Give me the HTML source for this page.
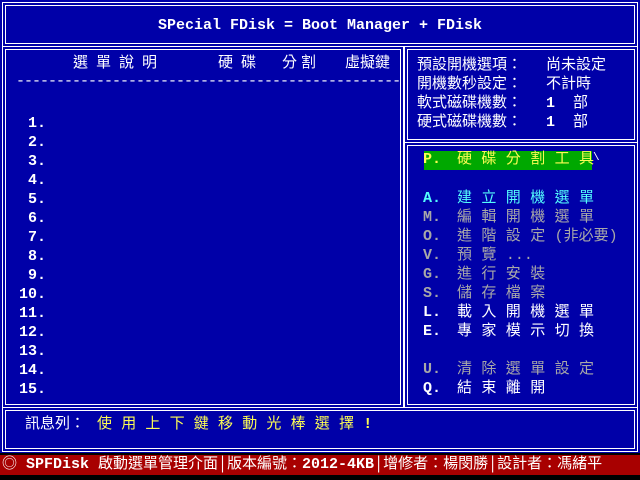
<!DOCTYPE html>
<html><head><meta charset="utf-8"><style>
body{margin:0;width:640px;height:480px;background:#000;position:relative;overflow:hidden;font-family:"Liberation Mono","WenQuanYi Zen Hei","Noto Sans CJK TC",monospace;color:#fff}
.bg{position:absolute;left:0;top:0;width:640px;height:453px;background:#0000a8}
.b{position:absolute;border:1px solid #fff;box-sizing:border-box}
.t{position:absolute;white-space:pre;font-size:15px;line-height:16px}
.bd{font-weight:bold}
.c{color:#54fcfc}.g{color:#a8a8a8}.y{color:#fcfc54}
</style></head><body>
<div class="bg"></div>
<div class="b" style="left:2px;top:2px;width:636px;height:45px"></div>
<div class="b" style="left:5px;top:5px;width:630px;height:39px"></div>
<div class="b" style="left:2px;top:46px;width:402px;height:362px"></div>
<div class="b" style="left:5px;top:49px;width:396px;height:356px"></div>
<div class="b" style="left:404px;top:46px;width:234px;height:97px"></div>
<div class="b" style="left:407px;top:49px;width:228px;height:91px"></div>
<div class="b" style="left:404px;top:142px;width:234px;height:266px"></div>
<div class="b" style="left:407px;top:145px;width:228px;height:260px"></div>
<div class="b" style="left:2px;top:407px;width:636px;height:45px"></div>
<div class="b" style="left:5px;top:410px;width:630px;height:39px"></div>
<div style="position:absolute;left:0;top:455px;width:640px;height:20px;background:#a80000"></div>

<div class="t bd" style="left:0;width:640px;text-align:center;top:18px">SPecial FDisk = Boot Manager + FDisk</div>

<div class="t" style="left:73px;top:56px;letter-spacing:8px">選單說明</div>
<div class="t" style="left:218px;top:56px;letter-spacing:8px">硬碟</div>
<div class="t" style="left:282px;top:56px;letter-spacing:4px">分割</div>
<div class="t" style="left:345px;top:56px">虛擬鍵</div>
<div class="t" style="left:16px;top:74px;letter-spacing:-1px;width:385px;overflow:hidden">----------------------------------------------------------------</div>

<div class="t bd" style="left:16px;top:114px;line-height:19px;width:30px;text-align:right">1.
2.
3.
4.
5.
6.
7.
8.
9.
10.
11.
12.
13.
14.
15.</div>

<div class="t" style="left:417px;top:56px;line-height:19px">預設開機選項：
開機數秒設定：
軟式磁碟機數：
硬式磁碟機數：</div>
<div class="t" style="left:546px;top:56px;line-height:19px">尚未設定
不計時
<b>1</b>  部
<b>1</b>  部</div>

<div style="position:absolute;left:424px;top:151px;width:168px;height:19px;background:#00a800"></div>
<div class="t y bd" style="left:423px;top:152px">P.</div>
<div class="t y" style="left:457px;top:152px;letter-spacing:9.4px">硬碟分割工具</div>
<div class="t" style="left:593px;top:150px;font-size:11px">\</div>

<div class="t" style="left:423px;top:189px;line-height:19px"><b class="c">A.</b>
<b class="g">M.</b>
<b class="g">O.</b>
<b class="g">V.</b>
<b class="g">G.</b>
<b class="g">S.</b>
<b>L.</b>
<b>E.</b>

<b class="g">U.</b>
<b>Q.</b></div>
<div class="t" style="left:457px;top:189px;line-height:19px;letter-spacing:9.4px"><span class="c">建立開機選單</span>
<span class="g">編輯開機選單</span>
<span class="g">進階設定<span style="letter-spacing:0">(非必要)</span></span>
<span class="g">預覽<span style="letter-spacing:0">...</span></span>
<span class="g">進行安裝</span>
<span class="g">儲存檔案</span>
載入開機選單
專家模示切換

<span class="g">清除選單設定</span>
結束離開</div>

<div class="t" style="left:25px;top:417px">訊息列：</div>
<div class="t y" style="left:97px;top:417px;letter-spacing:9.2px">使用上下鍵移動光棒選擇<b>!</b></div>

<div class="t" style="left:2px;top:457px;font-size:15px">◎ <b>SPFDisk</b> 啟動選單管理介面│版本編號：<b>2012-4KB</b>│增修者：楊閔勝│設計者：馮緒平</div>
</body></html>
